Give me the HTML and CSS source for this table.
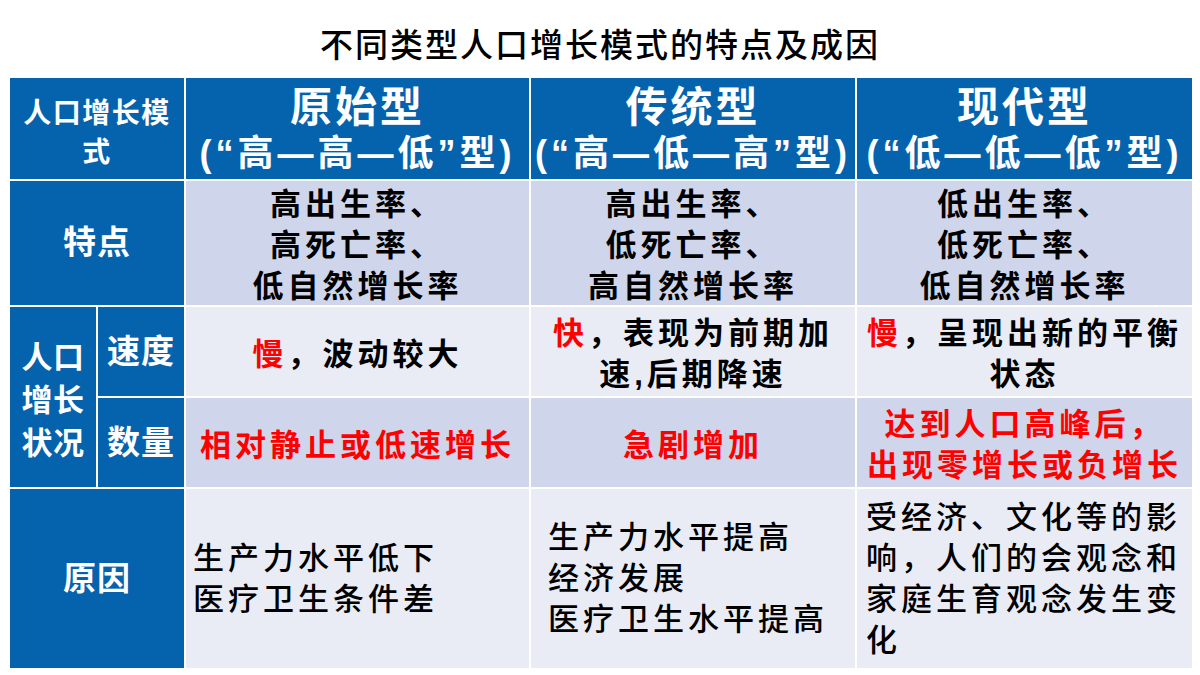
FILE: index.html
```html
<!DOCTYPE html>
<html lang="zh-CN">
<head>
<meta charset="utf-8">
<title>不同类型人口增长模式的特点及成因</title>
<link rel="stylesheet" href="styles.css">
</head>
<body>
<h1 class="title">不同类型人口增长模式的特点及成因</h1>
<div class="grid">
  <div class="cell blue hd-label span2">人口增长模式</div>
  <div class="cell blue hd"><div class="hd-main">原始型</div><div class="hd-sub">(“高—高—低”型)</div></div>
  <div class="cell blue hd"><div class="hd-main">传统型</div><div class="hd-sub">(“高—低—高”型)</div></div>
  <div class="cell blue hd"><div class="hd-main">现代型</div><div class="hd-sub">(“低—低—低”型)</div></div>

  <div class="cell blue label span2">特点</div>
  <div class="cell dark body"><div>高出生率、<br>高死亡率、<br>低自然增长率</div></div>
  <div class="cell dark body"><div>高出生率、<br>低死亡率、<br>高自然增长率</div></div>
  <div class="cell dark body"><div>低出生率、<br>低死亡率、<br>低自然增长率</div></div>

  <div class="cell blue label-tall">人口<br>增长<br>状况</div>
  <div class="cell blue label">速度</div>
  <div class="cell light body"><div><span class="red">慢</span>，波动较大</div></div>
  <div class="cell light body"><div><span class="red">快</span>，表现为前期加速,后期降速</div></div>
  <div class="cell light body"><div><span class="red">慢</span>，呈现出新的平衡状态</div></div>

  <div class="cell blue label">数量</div>
  <div class="cell dark body red"><div>相对静止或低速增长</div></div>
  <div class="cell dark body red"><div>急剧增加</div></div>
  <div class="cell dark body red"><div>达到人口高峰后，<br>出现零增长或负增长</div></div>

  <div class="cell blue label span2">原因</div>
  <div class="cell light reason reason-a"><div>生产力水平低下<br>医疗卫生条件差</div></div>
  <div class="cell light reason reason-b"><div>生产力水平提高<br>经济发展<br>医疗卫生水平提高</div></div>
  <div class="cell light reason reason-c"><div>受经济、文化等的影响，人们的会观念和家庭生育观念发生变化</div></div>
</div>
</body>
</html>
```

FILE: styles.css
```css
html, body {
  margin: 0;
  padding: 0;
  background: #ffffff;
}

body {
  width: 1200px;
  height: 675px;
  overflow: hidden;
  font-family: "Liberation Sans", "Noto Sans CJK SC", sans-serif;
  color: #000;
}

.title {
  margin: 0;
  height: 78px;
  box-sizing: border-box;
  padding-top: 26px;
  line-height: 40px;
  font-size: 33px;
  letter-spacing: 2px;
  font-weight: 500;
  text-align: center;
}

.grid {
  margin-left: 10px;
  width: 1182px;
  display: grid;
  grid-template-columns: 86px 86px 343px 324px 335px;
  grid-template-rows: 101px 124px 89px 89px 179px;
  gap: 2px;
}

.cell {
  display: flex;
  align-items: center;
  justify-content: center;
  text-align: center;
  font-weight: 700;
  box-sizing: border-box;
}

.span2 {
  grid-column: span 2;
}

.blue {
  background: #0563ae;
  color: #fff;
}

.dark {
  background: #cfd5ea;
}

.light {
  background: #e9ebf5;
}

.red {
  color: #f00;
}

.hd-label {
  font-size: 28px;
  letter-spacing: 1.5px;
  line-height: 39px;
  padding: 8px 8px 0;
}

.hd {
  flex-direction: column;
  justify-content: flex-start;
  padding-top: 7px;
}

.hd-main {
  font-size: 42px;
  letter-spacing: 3px;
  line-height: 46px;
  font-weight: 700;
}

.hd-sub {
  font-size: 36px;
  letter-spacing: 4px;
  line-height: 46px;
  font-weight: 700;
  white-space: nowrap;
}

.label {
  font-size: 33px;
  letter-spacing: 1px;
  line-height: 40px;
}

.label-tall {
  grid-row: span 2;
  font-size: 31px;
  letter-spacing: 0.5px;
  line-height: 43px;
  padding-top: 6px;
}

.body {
  font-size: 31px;
  letter-spacing: 4px;
  line-height: 41px;
  padding: 5px 6px 0;
}

.reason {
  justify-content: flex-start;
  text-align: left;
  font-size: 31px;
  letter-spacing: 4px;
  line-height: 41px;
  font-weight: 500;
}

.reason-a {
  padding-left: 7px;
}

.reason-b {
  padding-left: 17px;
}

.reason-c {
  padding-left: 9px;
  padding-right: 8px;
}
```
